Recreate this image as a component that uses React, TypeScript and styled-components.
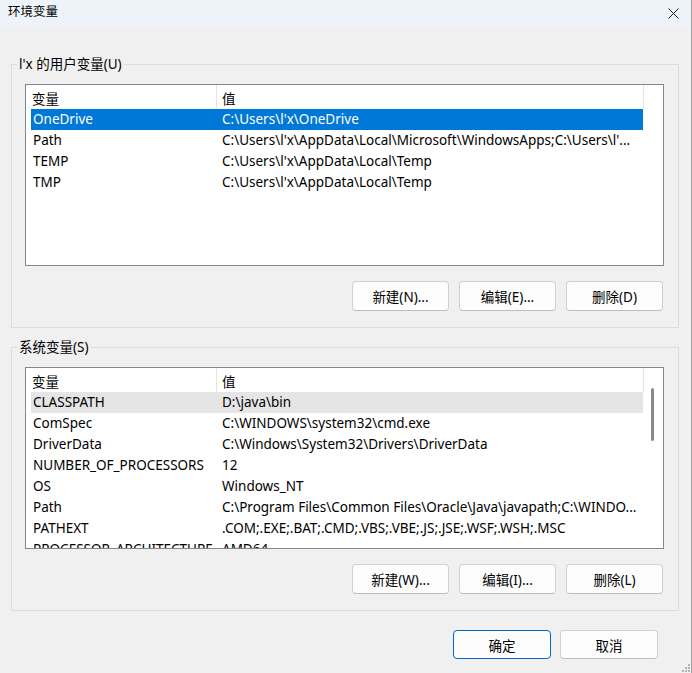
import React from "react";
import styled, { createGlobalStyle } from "styled-components";

const GlobalStyle = createGlobalStyle`
  html, body {
    margin: 0;
    padding: 0;
    background: #f0f0f0;
  }
  body {
    font-family: "Noto Sans", "Noto Sans CJK SC", sans-serif;
    font-size: 13.5px;
    color: #000;
  }
  * { box-sizing: border-box; }
`;

const Window = styled.div`
  position: relative;
  width: 692px;
  height: 673px;
  background: #f0f0f0;
  border-right: 1px solid #a3a3a3;
  display: flex;
  flex-direction: column;
  overflow: hidden;
`;

const TitleBar = styled.div`
  flex: none;
  height: 28px;
  background: #eef3f9;
  display: flex;
  align-items: center;
  justify-content: space-between;
  padding: 0 12px 4px 8px;
`;

const Title = styled.span`
  font-size: 12.5px;
  line-height: 16px;
`;

const CloseButton = styled.div`
  width: 11px;
  height: 11px;
  display: flex;
  margin-top: 2px;
`;

const Body = styled.div`
  flex: 1;
  display: flex;
  flex-direction: column;
  gap: 19px;
  padding: 36px 12px 0 11px;
`;

const Group = styled.section`
  position: relative;
  border: 1px solid #dcdcdc;
  padding: 19px 14px 16px 13px;
  display: flex;
  flex-direction: column;
  gap: 15px;
`;

const GroupLabel = styled.span`
  position: absolute;
  top: -9px;
  left: 5px;
  padding: 0 2px;
  line-height: 16px;
  background: #f0f0f0;
`;

const List = styled.div`
  height: 182px;
  border: 1px solid #828790;
  background: #fff;
  display: flex;
  overflow: hidden;
`;

const ListMain = styled.div`
  width: 618px;
  flex: none;
  display: flex;
  flex-direction: column;
  overflow: hidden;
`;

const Header = styled.div`
  flex: none;
  height: 24px;
  display: flex;
`;

const HeaderCell = styled.div<{ $width?: number }>`
  ${(p) => (p.$width ? `width: ${p.$width}px; flex: none;` : "flex: 1;")}
  border-right: 1px solid #e5e5e5;
  padding: 2px 0 0 ${(p) => (p.$width ? 6 : 5)}px;
  display: flex;
  align-items: center;
`;

const Row = styled.div<{ $state?: "selected" | "hover" }>`
  flex: none;
  height: 21px;
  width: 612px;
  margin-left: 5px;
  padding-left: 2px;
  display: grid;
  grid-template-columns: 189px 1fr;
  align-items: center;
  background: ${(p) =>
    p.$state === "selected" ? "#0078d7" : p.$state === "hover" ? "#e5e5e5" : "transparent"};
  color: ${(p) => (p.$state === "selected" ? "#fff" : "#000")};
`;

const Cell = styled.span`
  white-space: nowrap;
  overflow: hidden;
  text-overflow: ellipsis;
  line-height: 21px;
`;

const ScrollTrack = styled.div`
  flex: 1;
  display: flex;
  flex-direction: column;
`;

const ScrollThumb = styled.div`
  width: 3px;
  height: 53px;
  margin: 20px 0 0 7px;
  border-radius: 2px;
  background: #8a8a8a;
`;

const ButtonRow = styled.div`
  display: flex;
  justify-content: flex-end;
  gap: 10px;
  padding-right: 1px;
`;

const Button = styled.button<{ $primary?: boolean; $size?: "group" | "dialog" }>`
  width: ${(p) => (p.$size === "dialog" ? 98 : 97)}px;
  height: ${(p) => (p.$size === "dialog" ? 29 : 30)}px;
  padding: 0;
  font: inherit;
  color: #000;
  background: #fdfdfd;
  border: 1px solid ${(p) => (p.$primary ? "#0067c0" : "#d0d0d0")};
  border-bottom-color: ${(p) => (p.$primary ? "#0067c0" : "#bdbdbd")};
  border-radius: 4px;
  display: flex;
  align-items: center;
  justify-content: center;
`;

const Footer = styled.div`
  display: flex;
  justify-content: flex-end;
  gap: 9px;
  padding-right: 21px;
`;

const Grip = styled.div`
  position: absolute;
  right: 1px;
  bottom: 1px;
  width: 8px;
  height: 8px;
  display: flex;
`;

type Variable = { name: string; value: string; state?: "selected" | "hover" };

const userVars: Variable[] = [
  { name: "OneDrive", value: "C:\\Users\\l'x\\OneDrive", state: "selected" },
  { name: "Path", value: "C:\\Users\\l'x\\AppData\\Local\\Microsoft\\WindowsApps;C:\\Users\\l'..." },
  { name: "TEMP", value: "C:\\Users\\l'x\\AppData\\Local\\Temp" },
  { name: "TMP", value: "C:\\Users\\l'x\\AppData\\Local\\Temp" },
];

const systemVars: Variable[] = [
  { name: "CLASSPATH", value: "D:\\java\\bin", state: "hover" },
  { name: "ComSpec", value: "C:\\WINDOWS\\system32\\cmd.exe" },
  { name: "DriverData", value: "C:\\Windows\\System32\\Drivers\\DriverData" },
  { name: "NUMBER_OF_PROCESSORS", value: "12" },
  { name: "OS", value: "Windows_NT" },
  { name: "Path", value: "C:\\Program Files\\Common Files\\Oracle\\Java\\javapath;C:\\WINDO..." },
  { name: "PATHEXT", value: ".COM;.EXE;.BAT;.CMD;.VBS;.VBE;.JS;.JSE;.WSF;.WSH;.MSC" },
  { name: "PROCESSOR_ARCHITECTURE", value: "AMD64" },
];

function VariableList({ rows, scrollable }: { rows: Variable[]; scrollable?: boolean }) {
  return (
    <List>
      <ListMain>
        <Header>
          <HeaderCell $width={191}>变量</HeaderCell>
          <HeaderCell>值</HeaderCell>
        </Header>
        {rows.map((r) => (
          <Row key={r.name + r.value} $state={r.state}>
            <Cell>{r.name}</Cell>
            <Cell>{r.value}</Cell>
          </Row>
        ))}
      </ListMain>
      <ScrollTrack>{scrollable && <ScrollThumb />}</ScrollTrack>
    </List>
  );
}

function VariableGroup({
  label,
  rows,
  scrollable,
  keys,
}: {
  label: string;
  rows: Variable[];
  scrollable?: boolean;
  keys: [string, string, string];
}) {
  return (
    <Group>
      <GroupLabel>{label}</GroupLabel>
      <VariableList rows={rows} scrollable={scrollable} />
      <ButtonRow>
        <Button>新建({keys[0]})...</Button>
        <Button>编辑({keys[1]})...</Button>
        <Button>删除({keys[2]})</Button>
      </ButtonRow>
    </Group>
  );
}

export default function App() {
  return (
    <>
      <GlobalStyle />
      <Window>
        <TitleBar>
          <Title>环境变量</Title>
          <CloseButton>
            <svg width="11" height="11" viewBox="0 0 11 11">
              <path d="M0.5 0.5 L10.5 10.5 M10.5 0.5 L0.5 10.5" stroke="#1a1a1a" strokeWidth="1" fill="none" />
            </svg>
          </CloseButton>
        </TitleBar>
        <Body>
          <VariableGroup label="l'x 的用户变量(U)" rows={userVars} keys={["N", "E", "D"]} />
          <VariableGroup label="系统变量(S)" rows={systemVars} scrollable keys={["W", "I", "L"]} />
          <Footer>
            <Button $primary $size="dialog">确定</Button>
            <Button $size="dialog">取消</Button>
          </Footer>
        </Body>
        <Grip>
          <svg width="8" height="8" viewBox="0 0 8 8">
            {[
              [6, 0],
              [6, 3],
              [3, 3],
              [6, 6],
              [3, 6],
              [0, 6],
            ].map(([x, y]) => (
              <rect key={`${x}-${y}`} x={x} y={y} width="2" height="2" fill="#b4b4b4" />
            ))}
          </svg>
        </Grip>
      </Window>
    </>
  );
}
